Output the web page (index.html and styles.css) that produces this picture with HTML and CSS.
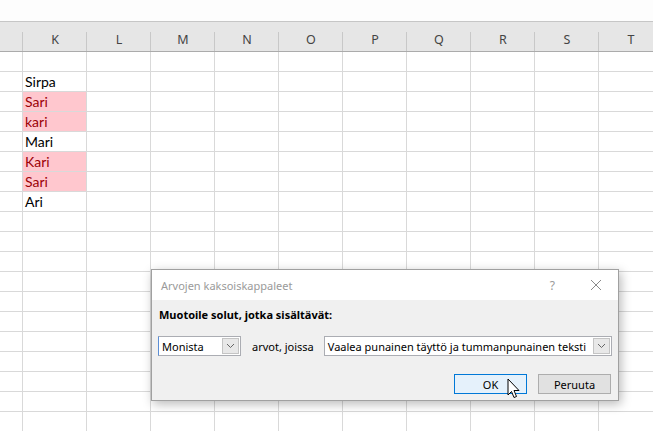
FILE: index.html
```html
<!DOCTYPE html>
<html lang="fi">

<head>
    <meta charset="UTF-8">
    <title>Arvojen kaksoiskappaleet</title>
    <link rel="stylesheet" href="styles.css">
</head>

<body>
    <div class="ribbon"></div>

    <div class="sheet">
        <div class="row header">
            <div class="cell first"></div>
            <div class="cell">K</div>
            <div class="cell">L</div>
            <div class="cell">M</div>
            <div class="cell">N</div>
            <div class="cell">O</div>
            <div class="cell">P</div>
            <div class="cell">Q</div>
            <div class="cell">R</div>
            <div class="cell">S</div>
            <div class="cell">T</div>
        </div>
        <div id="rows"></div>
    </div>

    <div class="dialog">
        <div class="titlebar">
            <span class="title">Arvojen kaksoiskappaleet</span>
            <span class="help">?</span>
            <svg class="close" width="12" height="12" viewBox="0 0 12 12">
                <path d="M1 1 L11 11 M11 1 L1 11" stroke="#8a8a8a" stroke-width="1" fill="none" />
            </svg>
        </div>
        <div class="body">
            <div class="label">Muotoile solut, jotka sisältävät:</div>
            <div class="controls">
                <div class="combo combo-small">
                    <span class="value">Monista</span>
                    <span class="arrow"><svg width="9" height="6" viewBox="0 0 9 6"><path d="M1 1 L4.5 4.5 L8 1" stroke="#666" fill="none" /></svg></span>
                </div>
                <span class="mid">arvot, joissa</span>
                <div class="combo combo-wide">
                    <span class="value">Vaalea punainen täyttö ja tummanpunainen teksti</span>
                    <span class="arrow"><svg width="9" height="6" viewBox="0 0 9 6"><path d="M1 1 L4.5 4.5 L8 1" stroke="#666" fill="none" /></svg></span>
                </div>
            </div>
            <div class="buttons">
                <button class="btn btn-ok">OK</button>
                <button class="btn">Peruuta</button>
            </div>
        </div>
        <svg class="cursor" width="14" height="22" viewBox="0 0 14 22">
            <path d="M1 1 L1 17 L4.5 13.5 L7 19.5 L9.5 18.5 L7 12.5 L12 12.5 Z" fill="#fff" stroke="#000" stroke-width="1" stroke-linejoin="round" />
        </svg>
    </div>

    <script>
        var names = ['', 'Sirpa', 'Sari', 'kari', 'Mari', 'Kari', 'Sari', 'Ari'];
        var dupes = { 2: true, 3: true, 5: true, 6: true };
        var rows = document.getElementById('rows');
        for (var r = 0; r < 19; r++) {
            var row = document.createElement('div');
            row.className = 'row';
            for (var c = 0; c < 11; c++) {
                var cell = document.createElement('div');
                cell.className = c === 0 ? 'cell first' : 'cell';
                if (c === 1 && names[r]) {
                    cell.textContent = names[r];
                    if (dupes[r]) cell.className += ' dupe';
                }
                row.appendChild(cell);
            }
            rows.appendChild(row);
        }
    </script>
</body>

</html>
```

FILE: styles.css
```css
body {
    margin: 0;
    background-color: white;
    overflow: hidden;
    width: 653px;
    height: 431px;
    position: relative;
}

.ribbon {
    height: 21px;
    border-bottom: 1px solid #c6c6c6;
    background-color: #fdfdfd;
}

.sheet {
    width: 653px;
    overflow: hidden;
}

.row {
    display: flex;
    height: 20px;
    box-sizing: border-box;
    border-bottom: 1px solid #d9d9d9;
    overflow: hidden;
}

.cell {
    width: 64px;
    flex: none;
    box-sizing: border-box;
    border-right: 1px solid #d9d9d9;
    font-family: Lato, 'Liberation Sans', sans-serif;
    font-size: 14px;
    line-height: 19px;
    padding-left: 2px;
    color: #000;
}

.cell.first {
    width: 23px;
}

.cell.dupe {
    background-color: #ffc7ce;
    color: #9c0006;
}

.header {
    height: 30px;
    background-color: #e6e6e6;
    border-bottom: 1px solid #ababab;
}

.header .cell {
    font-family: 'Noto Sans', sans-serif;
    font-size: 12.5px;
    color: #444;
    text-align: center;
    line-height: 36px;
    padding-left: 0;
    border-right: none;
    background-image: linear-gradient(#c8c8c8, #c8c8c8);
    background-size: 1px 19px;
    background-position: right bottom;
    background-repeat: no-repeat;
}

.dialog {
    position: absolute;
    left: 151px;
    top: 269px;
    width: 466px;
    height: 130px;
    border: 1px solid #a0a0a0;
    background-color: #f0f0f0;
    box-shadow: 2px 3px 10px rgba(0, 0, 0, 0.28);
    font-family: 'Noto Sans', sans-serif;
    font-size: 11px;
    color: #000;
}

.titlebar {
    height: 30px;
    background-color: white;
    display: flex;
    align-items: center;
    padding-left: 9px;
    padding-right: 16px;
}

.title {
    color: #9a9a9a;
    font-size: 11px;
    flex: 1;
}

.help {
    color: #9a9a9a;
    font-size: 12px;
    margin-right: 35px;
}

.body {
    padding: 7px 6px 0 6px;
}

.label {
    font-weight: bold;
    margin-left: 1px;
    line-height: 16px;
}

.controls {
    display: flex;
    align-items: center;
    margin-top: 13px;
}

.combo {
    height: 20px;
    box-sizing: border-box;
    flex: none;
    border: 1px solid #abadb3;
    background-color: white;
    display: flex;
    align-items: center;
}

.combo-small {
    width: 83px;
    border-left-color: #5b8ed6;
}

.combo-wide {
    width: 288px;
}

.value {
    flex: 1;
    padding-left: 3px;
    white-space: nowrap;
    overflow: hidden;
}

.arrow {
    width: 17px;
    height: 16px;
    margin-right: 1px;
    border: 1px solid #c4c4c4;
    background-color: #e8e8e8;
    box-sizing: border-box;
    display: flex;
    align-items: center;
    justify-content: center;
}

.mid {
    flex: none;
    white-space: nowrap;
    margin-left: 11px;
    margin-right: 10px;
}

.buttons {
    display: flex;
    justify-content: flex-end;
    gap: 11px;
    margin-top: 18px;
    padding-right: 1px;
}

.btn {
    width: 73px;
    height: 20px;
    border: 1px solid #adadad;
    background-color: #e1e1e1;
    font-family: 'Noto Sans', sans-serif;
    font-size: 11px;
    padding: 0;
    color: #000;
}

.btn-ok {
    border-color: #0078d7;
    background-color: #e5f1fb;
}

.cursor {
    position: absolute;
    left: 355px;
    top: 108px;
}
```
